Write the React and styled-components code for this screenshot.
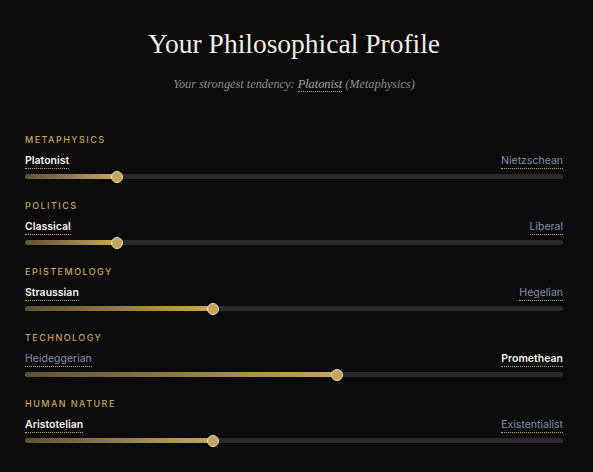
import React from 'react';
import styled, { createGlobalStyle } from 'styled-components';

const GlobalStyle = createGlobalStyle`
  html, body {
    margin: 0;
    padding: 0;
    background: #0b0b0b;
  }
  body {
    font-family: Inter, "Noto Sans", sans-serif;
  }
`;

const Page = styled.div`
  min-height: 472px;
  background: #0b0b0b;
  padding: 26px 30px 20px 25px;
  box-sizing: border-box;
`;

const Title = styled.h1`
  margin: 0;
  text-align: center;
  font-family: "Liberation Serif", "DejaVu Serif", serif;
  font-weight: 400;
  font-size: 27.5px;
  line-height: 36px;
  color: #f2eee4;
`;

const Subtitle = styled.p`
  margin: 14px 0 0;
  text-align: center;
  font-family: "Liberation Serif", "DejaVu Serif", serif;
  font-style: italic;
  font-size: 12.3px;
  line-height: 16px;
  color: #8e8e8e;
`;

const Highlight = styled.span`
  font-weight: 400;
  color: #a9a9a9;
  border-bottom: 1px dotted #c9a55a;
`;

const Scales = styled.div`
  margin-top: 42px;
  display: flex;
  flex-direction: column;
  gap: 21px;
`;

const Scale = styled.div`
  display: flex;
  flex-direction: column;
`;

const Category = styled.div`
  font-size: 9px;
  line-height: 12px;
  letter-spacing: 1.45px;
  text-transform: uppercase;
  color: #c9a55a;
  font-weight: 500;
`;

const Ends = styled.div`
  margin-top: 8px;
  display: flex;
  justify-content: space-between;
  align-items: flex-end;
`;

const End = styled.span`
  font-size: 10.5px;
  line-height: 13px;
  padding-bottom: 1px;
  border-bottom: 1px dotted #c9a55a;
  color: ${(p) => (p.$active ? '#f4f1ea' : '#8193a6')};
  font-weight: ${(p) => (p.$active ? 600 : 400)};
`;

const Track = styled.div`
  position: relative;
  margin-top: 5px;
  height: 5px;
  border-radius: 3px;
  background: #2a2a2a;
`;

const Fill = styled.div`
  height: 100%;
  border-radius: 3px;
  background: linear-gradient(90deg, #5e5035 0%, #c6a75f 100%);
`;

const Thumb = styled.div`
  position: absolute;
  top: 50%;
  width: 10px;
  height: 10px;
  border-radius: 50%;
  background: #c4a560;
  border: 1.5px solid #e6dcc2;
  transform: translate(-50%, -50%);
`;

const scales = [
  { name: 'Metaphysics', left: 'Platonist', right: 'Nietzschean', value: 17.1, leftWins: true },
  { name: 'Politics', left: 'Classical', right: 'Liberal', value: 17.1, leftWins: true },
  { name: 'Epistemology', left: 'Straussian', right: 'Hegelian', value: 35, leftWins: true },
  { name: 'Technology', left: 'Heideggerian', right: 'Promethean', value: 58, leftWins: false },
  { name: 'Human Nature', left: 'Aristotelian', right: 'Existentialist', value: 35, leftWins: true },
];

const App = () => (
  <>
    <GlobalStyle />
    <Page>
      <Title>Your Philosophical Profile</Title>
      <Subtitle>
        Your strongest tendency: <Highlight>Platonist</Highlight> (Metaphysics)
      </Subtitle>
      <Scales>
        {scales.map((s) => (
          <Scale key={s.name}>
            <Category>{s.name}</Category>
            <Ends>
              <End $active={s.leftWins}>{s.left}</End>
              <End $active={!s.leftWins}>{s.right}</End>
            </Ends>
            <Track>
              <Fill style={{ width: `${s.value}%` }} />
              <Thumb style={{ left: `${s.value}%` }} />
            </Track>
          </Scale>
        ))}
      </Scales>
    </Page>
  </>
);

export default App;
